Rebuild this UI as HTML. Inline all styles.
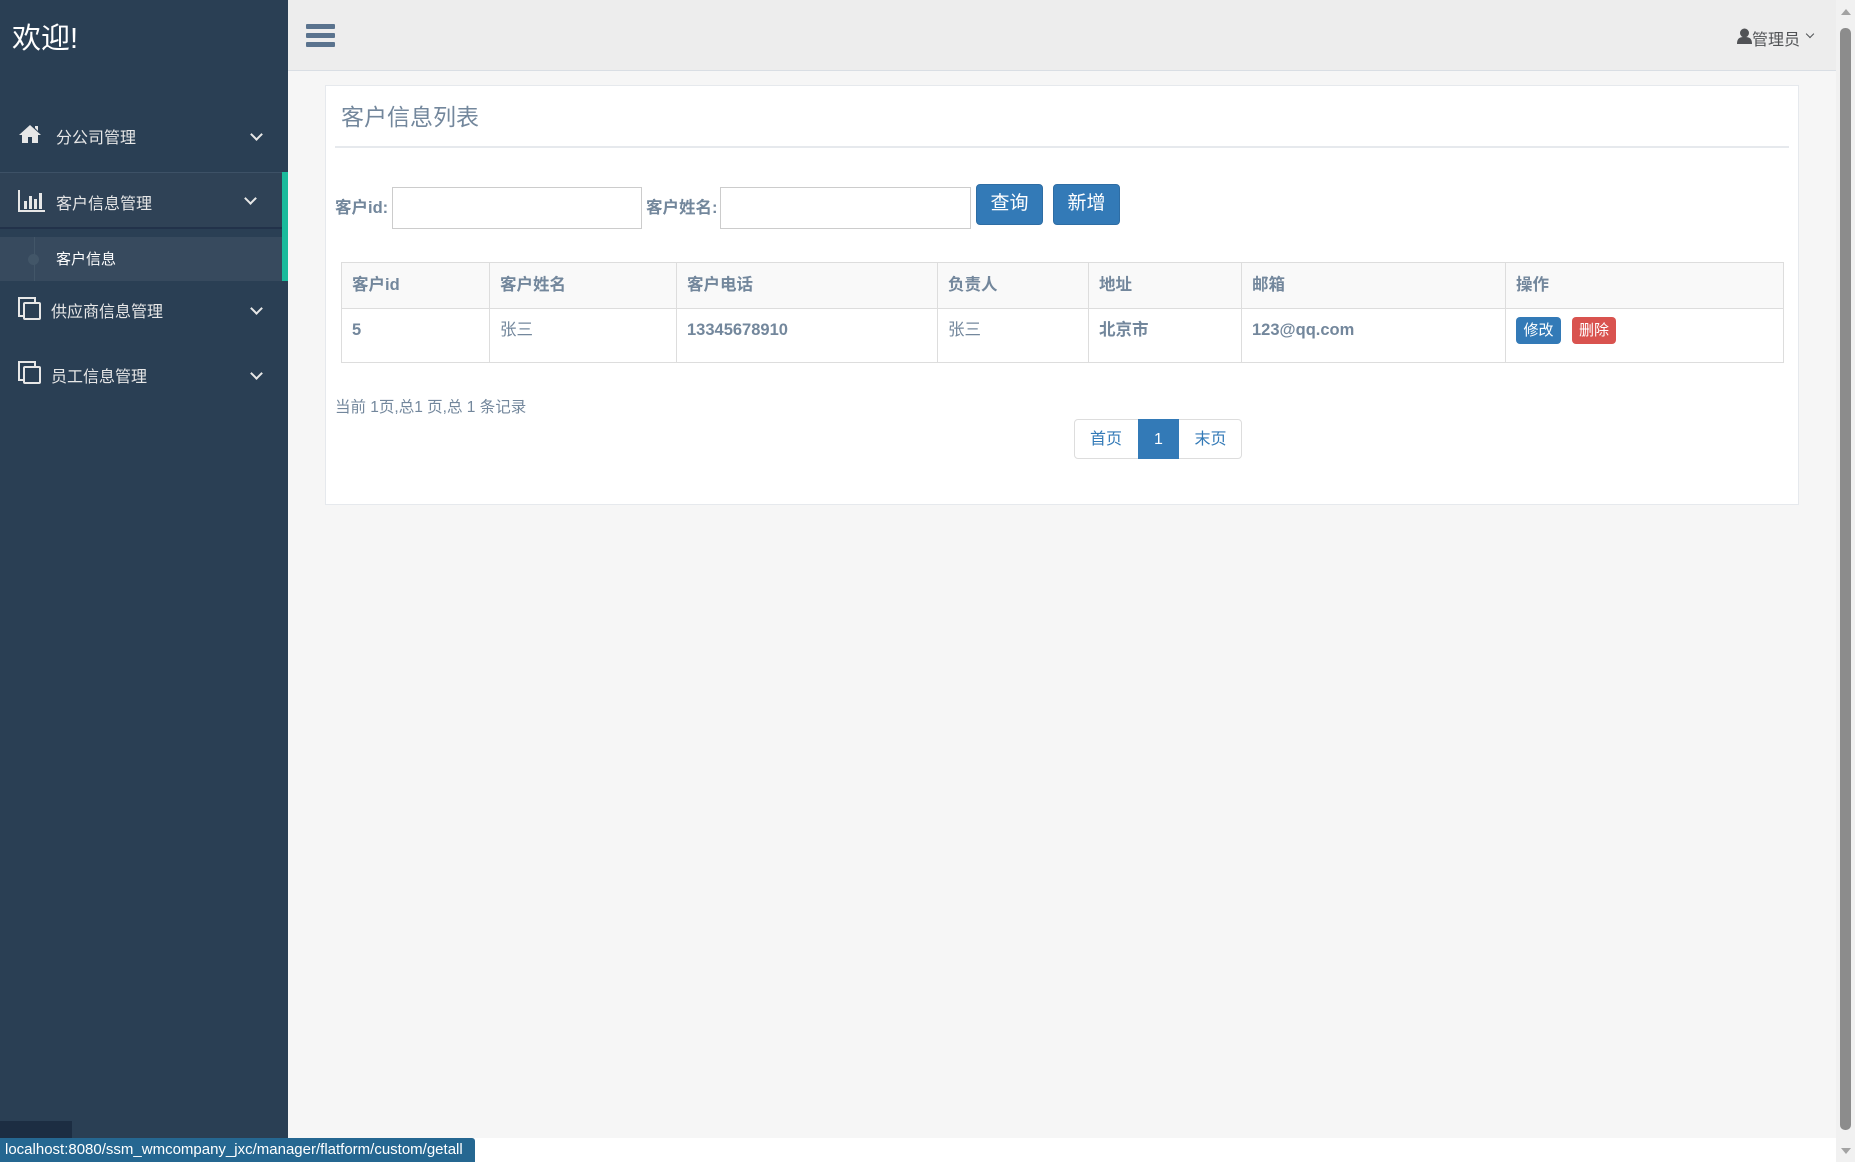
<!DOCTYPE html>
<html><head><meta charset="utf-8">
<style>
*{box-sizing:border-box;margin:0;padding:0}
body{width:1855px;height:1162px;overflow:hidden;background:#fff;font-family:"Liberation Sans","Noto Sans CJK SC",sans-serif;position:relative}
.side{position:absolute;left:0;top:0;width:288px;height:1138px;background:#2a3f54;color:#e7e7e7}
.main{position:absolute;left:288px;top:0;width:1548px;height:1138px;background:#f6f6f6}
.top{position:absolute;left:0;top:0;width:1548px;height:71px;background:#ededed;border-bottom:1px solid #d9dee4}
.abs{position:absolute}
.menu{position:absolute;left:0;width:288px;font-size:16px;color:#e7e7e7}
.chev{position:absolute;width:9px;height:9px;border-right:2.5px solid #e7e7e7;border-bottom:2.5px solid #e7e7e7;transform:rotate(45deg)}
.card{position:absolute;left:325px;top:85px;width:1474px;height:420px;background:#fff;border:1px solid #e6e9ed}
table{border-collapse:collapse;position:absolute;left:341px;top:262px;width:1443px;font-size:16.5px;color:#73879c;font-weight:bold}
td,th{border:1px solid #ddd;text-align:left;padding:0 10px;vertical-align:top}
th{height:45px;background:#f9f9f9;line-height:45px}
td{height:54px;line-height:42px}
.btn{position:absolute;color:#fff;border-radius:4px;text-align:center}
</style></head><body>
<div class="side">
 <div class="abs" style="left:12px;top:15px;font-size:29px;color:#fff">欢迎!</div>
 <div class="menu" style="top:115px;height:44px">
  <svg class="abs" style="left:18px;top:9px" width="24" height="20" viewBox="0 0 24 20"><path d="M12 1 L1 11 H4 V19 H10 V13 H14 V19 H20 V11 H23 Z M17 2 H20 V7 L17 4Z" fill="#e7e7e7"/></svg>
  <div class="abs" style="left:56px;top:9px">分公司管理</div>
  <div class="chev" style="left:252px;top:15px"></div>
 </div>
 <div class="abs" style="left:0;top:172px;width:282px;height:57px;background:#2f4256;border-top:1px solid #3d5166;border-bottom:2px solid #22324a"></div>
 <div class="abs" style="left:0;top:237px;width:282px;height:44px;background:#374a5e"></div>
 <div class="abs" style="left:34px;top:237px;width:1px;height:44px;background:#425668"></div>
 <div class="abs" style="left:28px;top:254px;width:11px;height:11px;border-radius:50%;background:#425668"></div>
 <div class="abs" style="left:282px;top:172px;width:6px;height:109px;background:#1abb9c"></div>
 <div class="menu" style="top:172px;height:57px">
  <svg class="abs" style="left:18px;top:18px" width="27" height="22" viewBox="0 0 27 22"><path d="M1 0V21H27" stroke="#e7e7e7" stroke-width="2" fill="none"/><rect x="6" y="11" width="3" height="8" fill="#e7e7e7"/><rect x="11" y="6" width="3" height="13" fill="#e7e7e7"/><rect x="16" y="9" width="3" height="10" fill="#e7e7e7"/><rect x="21" y="3" width="3" height="16" fill="#e7e7e7"/></svg>
  <div class="abs" style="left:56px;top:18px">客户信息管理</div>
  <div class="chev" style="left:246px;top:22px"></div>
 </div>
 <div class="abs" style="left:56px;top:248px;font-size:15px;color:#fff">客户信息</div>
 <div class="menu" style="top:290px;height:44px">
  <svg class="abs" style="left:17px;top:6px" width="26" height="26" viewBox="0 0 26 26" fill="none" stroke="#e7e7e7" stroke-width="2"><path d="M6 20H2V2H18V6"/><rect x="7" y="7" width="16" height="16" rx="1"/></svg>
  <div class="abs" style="left:51px;top:8px">供应商信息管理</div>
  <div class="chev" style="left:252px;top:14px"></div>
 </div>
 <div class="menu" style="top:355px;height:44px">
  <svg class="abs" style="left:17px;top:5px" width="26" height="26" viewBox="0 0 26 26" fill="none" stroke="#e7e7e7" stroke-width="2"><path d="M6 20H2V2H18V6"/><rect x="7" y="7" width="16" height="16" rx="1"/></svg>
  <div class="abs" style="left:51px;top:8px">员工信息管理</div>
  <div class="chev" style="left:252px;top:14px"></div>
 </div>
 <div class="abs" style="left:0;top:1121px;width:72px;height:17px;background:#1c2d42"></div>
</div>
<div class="main">
 <div class="top">
  <div class="abs" style="left:18px;top:24px;width:29px;height:5px;background:#5a738e;border-radius:1px"></div>
  <div class="abs" style="left:18px;top:33px;width:29px;height:5px;background:#5a738e;border-radius:1px"></div>
  <div class="abs" style="left:18px;top:42px;width:29px;height:5px;background:#5a738e;border-radius:1px"></div>
  <svg class="abs" style="left:1449px;top:28px" width="15" height="16" viewBox="0 0 15 16"><circle cx="7.5" cy="5" r="4.5" fill="#515356"/><path d="M0 16C0 10 3 9 7.5 9S15 10 15 16Z" fill="#515356"/></svg>
  <div class="abs" style="left:1464px;top:26px;font-size:16px;color:#515356">管理员</div>
  <div class="abs" style="left:1519px;top:31px;width:6px;height:6px;border-right:1.3px solid #515356;border-bottom:1.3px solid #515356;transform:rotate(45deg)"></div>
 </div>
</div>
<div class="card"></div>
<div class="abs" style="left:341px;top:98px;font-size:23px;color:#73879c">客户信息列表</div>
<div class="abs" style="left:335px;top:146px;width:1454px;height:2px;background:#e6e9ed"></div>
<div class="abs" style="left:335px;top:194px;font-size:16.5px;color:#73879c;font-weight:bold">客户id:</div>
<div class="abs" style="left:392px;top:187px;width:250px;height:42px;border:1px solid #ccc;background:#fff"></div>
<div class="abs" style="left:646px;top:194px;font-size:16.5px;color:#73879c;font-weight:bold">客户姓名:</div>
<div class="abs" style="left:720px;top:187px;width:251px;height:42px;border:1px solid #ccc;background:#fff"></div>
<div class="btn" style="left:976px;top:184px;width:67px;height:41px;background:#337ab7;border:1px solid #2e6da4;font-size:19px;line-height:38px">查询</div>
<div class="btn" style="left:1053px;top:184px;width:67px;height:41px;background:#337ab7;border:1px solid #2e6da4;font-size:19px;line-height:38px">新增</div>
<table>
<tr><th style="width:148px">客户id</th><th style="width:187px">客户姓名</th><th style="width:261px">客户电话</th><th style="width:151px">负责人</th><th style="width:153px">地址</th><th style="width:264px">邮箱</th><th>操作</th></tr>
<tr><td>5</td><td style="font-weight:normal">张三</td><td>13345678910</td><td style="font-weight:normal">张三</td><td>北京市</td><td>123@qq.com</td><td></td></tr>
</table>
<div class="btn" style="left:1516px;top:317px;width:45px;height:27px;background:#337ab7;font-size:15px;line-height:27px">修改</div>
<div class="btn" style="left:1572px;top:317px;width:44px;height:27px;background:#d9534f;font-size:15px;line-height:27px">删除</div>
<div class="abs" style="left:335px;top:395px;font-size:15.5px;color:#73879c">当前 1页,总1 页,总 1 条记录</div>
<div class="abs" style="left:1074px;top:419px;width:168px;height:40px;border:1px solid #ddd;border-radius:4px;background:#fff"></div>
<div class="abs" style="left:1074px;top:420px;width:64px;height:40px;line-height:40px;text-align:center;color:#337ab7;font-size:16px">首页</div>
<div class="abs" style="left:1138px;top:419px;width:41px;height:40px;line-height:42px;text-align:center;color:#fff;background:#337ab7;font-size:16px">1</div>
<div class="abs" style="left:1179px;top:420px;width:63px;height:40px;line-height:40px;text-align:center;color:#337ab7;font-size:16px">末页</div>
<div class="abs" style="left:1836px;top:0;width:19px;height:1162px;background:#f1f1f1"></div>
<div class="abs" style="left:1840px;top:28px;width:11px;height:1102px;background:#8c8c8c;border-radius:5px"></div>
<div class="abs" style="left:1841px;top:9px;width:0;height:0;border-left:5px solid transparent;border-right:5px solid transparent;border-bottom:6px solid #a3a3a3"></div>
<div class="abs" style="left:1841px;top:1148px;width:0;height:0;border-left:5px solid transparent;border-right:5px solid transparent;border-top:6px solid #a3a3a3"></div>
<div class="abs" style="left:0;top:1138px;width:475px;height:24px;background:#256791;border-top-right-radius:3px;color:#fff;font-size:15px;line-height:24px;padding-left:5px">localhost:8080/ssm_wmcompany_jxc/manager/flatform/custom/getall</div>
</body></html>
